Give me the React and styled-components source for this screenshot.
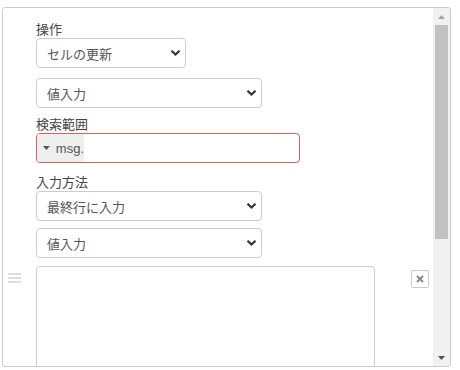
import React from 'react';
import styled, { createGlobalStyle } from 'styled-components';

const GlobalStyle = createGlobalStyle`
  html, body {
    margin: 0;
    padding: 0;
    background: #fff;
  }
  body {
    font-family: "Liberation Sans", "Noto Sans CJK JP", sans-serif;
    font-size: 13px;
    color: #555;
  }
`;

const Frame = styled.div`
  margin: 7px 0 0 2px;
  width: 449px;
  height: 360px;
  box-sizing: border-box;
  border: 1px solid #ccc;
  border-radius: 3px;
  display: flex;
  overflow: hidden;
`;

const Content = styled.div`
  flex: 1;
  overflow: hidden;
  padding-top: 13px;
`;

const Field = styled.div`
  padding-left: 33px;
  margin-top: ${(p) => p.$top || 0}px;
`;

const Label = styled.div`
  line-height: 17px;
  height: 17px;
  color: #444;
`;

const SelectBox = styled.div`
  width: ${(p) => p.$width}px;
  height: 30px;
  box-sizing: border-box;
  border: 1px solid #ccc;
  border-radius: 4px;
  background: #fff;
  display: flex;
  align-items: center;
  justify-content: space-between;
  padding: 0 4px 0 10px;
  color: #555;
`;

const TypedInput = styled.div`
  width: 264px;
  height: 30px;
  box-sizing: border-box;
  border: 1px solid #d6615f;
  border-radius: 4px;
  display: flex;
  overflow: hidden;
`;

const TypeButton = styled.div`
  width: 47px;
  background: #eee;
  display: flex;
  align-items: center;
  gap: 6px;
  padding-left: 6px;
  box-sizing: border-box;
  color: #555;
`;

const ListRow = styled.div`
  display: grid;
  grid-template-columns: 33px 339px 1fr;
  margin-top: 8px;
`;

const Handle = styled.div`
  padding: 6px 0 0 5px;
`;

const ValueBox = styled.div`
  height: 130px;
  box-sizing: border-box;
  border: 1px solid #ccc;
  border-radius: 4px;
`;

const DeleteButton = styled.div`
  justify-self: end;
  margin: 4px 4px 0 0;
  width: 18px;
  height: 18px;
  box-sizing: border-box;
  border: 1px solid #ccc;
  border-radius: 2px;
  display: flex;
  align-items: center;
  justify-content: center;
`;

const Scrollbar = styled.div`
  width: 17px;
  background: #f1f1f1;
  display: flex;
  flex-direction: column;
  align-items: center;
`;

const Arrow = styled.div`
  height: 17px;
  display: flex;
  align-items: center;
  justify-content: center;
`;

const Thumb = styled.div`
  width: 13px;
  height: 214px;
  background: #c1c1c1;
`;

const Spacer = styled.div`
  flex: 1;
`;

const Chevron = () => (
  <svg width="11" height="8" viewBox="0 0 11 8">
    <path d="M1.5 1.8 L5.5 5.6 L9.5 1.8" fill="none" stroke="#333" strokeWidth="2.2" />
  </svg>
);

const Select = ({ width, children }) => (
  <SelectBox $width={width}>
    <span>{children}</span>
    <Chevron />
  </SelectBox>
);

function App() {
  return (
    <>
      <GlobalStyle />
      <Frame>
        <Content>
          <Field>
            <Label>操作</Label>
            <Select width={150}>セルの更新</Select>
          </Field>
          <Field $top={10}>
            <Select width={226}>値入力</Select>
          </Field>
          <Field $top={8}>
            <Label>検索範囲</Label>
            <TypedInput>
              <TypeButton>
                <svg width="7" height="4" viewBox="0 0 7 4">
                  <path d="M0 0 L7 0 L3.5 4 Z" fill="#555" />
                </svg>
                <span>msg.</span>
              </TypeButton>
            </TypedInput>
          </Field>
          <Field $top={11}>
            <Label>入力方法</Label>
            <Select width={226}>最終行に入力</Select>
          </Field>
          <Field $top={7}>
            <Select width={226}>値入力</Select>
          </Field>
          <ListRow>
            <Handle>
              <svg width="13" height="11" viewBox="0 0 13 11">
                <rect x="0" y="0" width="13" height="2" fill="#ddd" />
                <rect x="0" y="4" width="13" height="2" fill="#ddd" />
                <rect x="0" y="8" width="13" height="2" fill="#ddd" />
              </svg>
            </Handle>
            <ValueBox />
            <DeleteButton>
              <svg width="8" height="8" viewBox="0 0 8 8">
                <path d="M1 1 L7 7 M7 1 L1 7" stroke="#888" strokeWidth="2" />
              </svg>
            </DeleteButton>
          </ListRow>
        </Content>
        <Scrollbar>
          <Arrow>
            <svg width="7" height="4" viewBox="0 0 7 4">
              <path d="M0 4 L7 4 L3.5 0 Z" fill="#a3a3a3" />
            </svg>
          </Arrow>
          <Thumb />
          <Spacer />
          <Arrow>
            <svg width="7" height="4" viewBox="0 0 7 4">
              <path d="M0 0 L7 0 L3.5 4 Z" fill="#505050" />
            </svg>
          </Arrow>
        </Scrollbar>
      </Frame>
    </>
  );
}

export default App;
